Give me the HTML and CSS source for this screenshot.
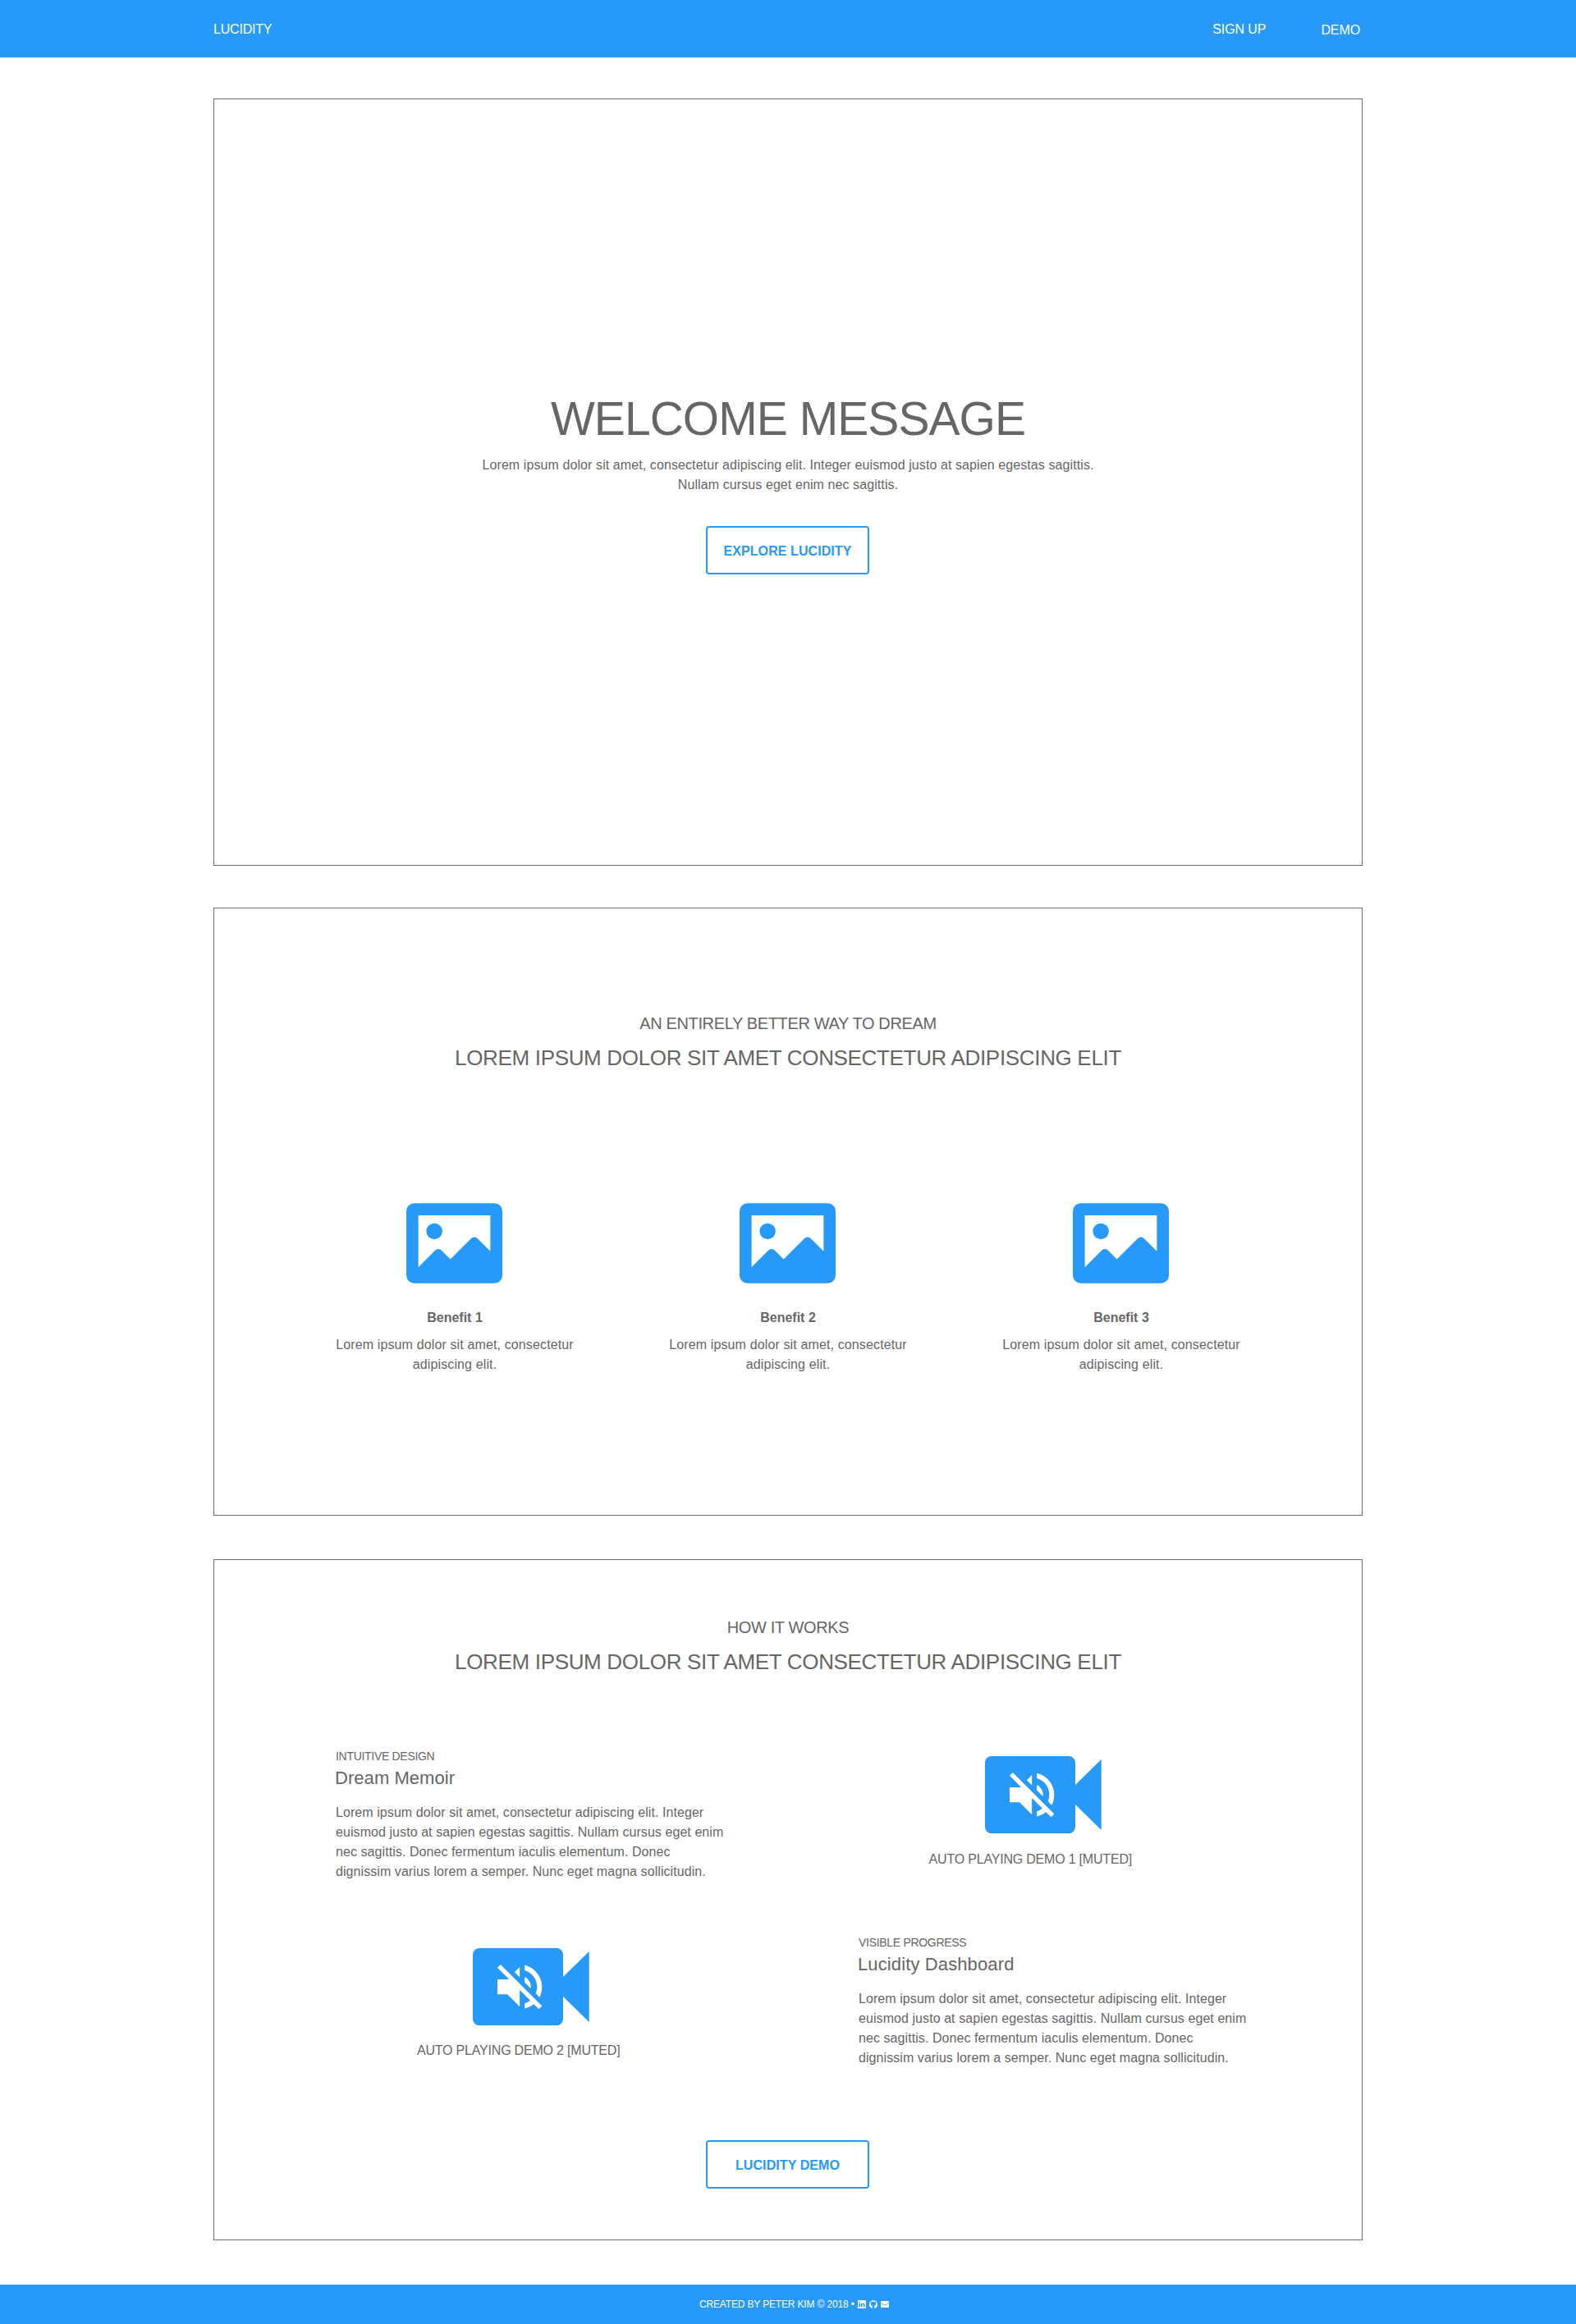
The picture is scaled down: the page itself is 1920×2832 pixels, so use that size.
FILE: index.html
```html
<!DOCTYPE html>
<html lang="en">
<head>
<meta charset="utf-8">
<title>Lucidity</title>
<link rel="stylesheet" href="styles.css">
</head>
<body>
<svg class="sprite" aria-hidden="true">
  <symbol id="picture" viewBox="0 0 24 20">
    <path fill-rule="evenodd" d="M2 0H22A2 2 0 0 1 24 2V18A2 2 0 0 1 22 20H2A2 2 0 0 1 0 18V2A2 2 0 0 1 2 0ZM3 3V16L7.1 11.9Q8 11 8.900 11.900L11 14L16.100 8.900Q17 8 17.900 8.900L21 12V3Z"/>
    <circle cx="7" cy="7" r="2"/>
  </symbol>
  <symbol id="camera" viewBox="0 0 142 94.5">
    <path d="M8 0H102A8 8 0 0 1 110 8V35L141.700 4V90L110 59V86.300A8 8 0 0 1 102 94.300H8A8 8 0 0 1 0 86.300V8A8 8 0 0 1 8 0Z"/>
    <path fill="#fff" transform="translate(20.9 10.9) scale(3.02)" d="M16.500 12c0-1.770-1.020-3.290-2.500-4.030v2.210l2.450 2.450c.03-.2.05-.41.05-.63zm2.500 0c0 .94-.2 1.820-.54 2.640l1.510 1.510C20.630 14.910 21 13.500 21 12c0-4.280-2.990-7.860-7-8.770v2.060c2.890.86 5 3.540 5 6.710zM4.270 3L3 4.270 7.730 9H3v6h4l5 5v-6.730l4.250 4.250c-.67.52-1.420.93-2.250 1.180v2.060c1.380-.31 2.630-.95 3.690-1.810L19.730 21 21 19.730l-9-9L4.270 3zM12 4L9.910 6.090 12 8.180V4z"/>
  </symbol>
</svg>

<header class="topbar">
  <div class="topbar-inner">
    <a class="brand">LUCIDITY</a>
    <nav class="nav"><a class="signup">SIGN UP</a><a class="demo-link">DEMO</a></nav>
  </div>
</header>

<main class="page">
  <section class="panel hero">
    <h1>WELCOME MESSAGE</h1>
    <p class="copy">Lorem ipsum dolor sit amet, consectetur adipiscing elit. Integer euismod justo at sapien egestas sagittis.<br>Nullam cursus eget enim nec sagittis.</p>
    <a class="button">EXPLORE LUCIDITY</a>
  </section>

  <section class="panel benefits">
    <p class="eyebrow">AN ENTIRELY BETTER WAY TO DREAM</p>
    <h2>LOREM IPSUM DOLOR SIT AMET CONSECTETUR ADIPISCING ELIT</h2>
    <div class="benefit-grid">
      <article class="benefit"><svg class="picture"><use href="#picture"/></svg><h3>Benefit 1</h3><p class="copy">Lorem ipsum dolor sit amet, consectetur<br>adipiscing elit.</p></article>
      <article class="benefit"><svg class="picture"><use href="#picture"/></svg><h3>Benefit 2</h3><p class="copy">Lorem ipsum dolor sit amet, consectetur<br>adipiscing elit.</p></article>
      <article class="benefit"><svg class="picture"><use href="#picture"/></svg><h3>Benefit 3</h3><p class="copy">Lorem ipsum dolor sit amet, consectetur<br>adipiscing elit.</p></article>
    </div>
  </section>

  <section class="panel works">
    <p class="eyebrow">HOW IT WORKS</p>
    <h2>LOREM IPSUM DOLOR SIT AMET CONSECTETUR ADIPISCING ELIT</h2>
    <div class="row first">
      <article class="feature">
        <p class="kicker">INTUITIVE DESIGN</p>
        <h3>Dream Memoir</h3>
        <p class="copy">Lorem ipsum dolor sit amet, consectetur adipiscing elit. Integer<br>euismod justo at sapien egestas sagittis. Nullam cursus eget enim<br>nec sagittis. Donec fermentum iaculis elementum. Donec<br>dignissim varius lorem a semper. Nunc eget magna sollicitudin.</p>
      </article>
      <figure class="video"><svg class="camera"><use href="#camera"/></svg><figcaption>AUTO PLAYING DEMO 1 [MUTED]</figcaption></figure>
    </div>
    <div class="row second">
      <figure class="video"><svg class="camera"><use href="#camera"/></svg><figcaption>AUTO PLAYING DEMO 2 [MUTED]</figcaption></figure>
      <article class="feature">
        <p class="kicker">VISIBLE PROGRESS</p>
        <h3>Lucidity Dashboard</h3>
        <p class="copy">Lorem ipsum dolor sit amet, consectetur adipiscing elit. Integer<br>euismod justo at sapien egestas sagittis. Nullam cursus eget enim<br>nec sagittis. Donec fermentum iaculis elementum. Donec<br>dignissim varius lorem a semper. Nunc eget magna sollicitudin.</p>
      </article>
    </div>
    <a class="button">LUCIDITY DEMO</a>
  </section>
</main>

<footer class="footer">
  <span class="credit">CREATED BY PETER KIM © 2018 •</span>
  <span class="social">
    <svg viewBox="0 0 448 448"><path d="M416 0H31.900C14.300 0 0 14.500 0 32.300v383.400C0 433.500 14.300 448 31.900 448H416c17.600 0 32-14.500 32-32.300V32.300C448 14.500 433.600 0 416 0zM135.400 384H69V170.200h66.500V384zM102.200 141c-21.300 0-38.500-17.300-38.500-38.500S80.900 64 102.200 64c21.200 0 38.500 17.300 38.500 38.500 0 21.300-17.200 38.500-38.500 38.500zm282.100 243h-66.400V280c0-24.800-.5-56.700-34.500-56.700-34.600 0-39.900 27-39.900 54.900V384h-66.400V170.200h63.700v29.200h.9c8.900-16.800 30.600-34.500 62.900-34.500 67.200 0 79.700 44.300 79.700 101.900V384z"/></svg>
    <svg viewBox="0 0 24 24"><path d="M12 .5a12 12 0 0 0-4.200 23.200c.6.100.9-.3.900-.6v-5.200c0-1.300.3-2.100.9-2.600-3-.3-5.500-1.500-5.500-5.300 0-1.400.5-2.500 1.300-3.300-.2-.8-.3-2 .2-3.200 1.200-.1 2.500.6 3.500 1.300a11 11 0 0 1 5.800 0c1-.7 2.300-1.400 3.500-1.300.5 1.200.4 2.400.2 3.200.8.800 1.300 1.900 1.300 3.300 0 3.800-2.500 5-5.500 5.300.6.500.9 1.300.9 2.600v5.200c0 .3.300.7.900.6A12 12 0 0 0 12 .5z"/></svg>
    <svg class="mail" viewBox="0 0 10 8"><rect width="10" height="8" rx="1"/><path d="M0 2L4 4.900Q5 5.500 6 4.900L10 2" fill="none" stroke="#2699fb" stroke-width=".8"/></svg>
  </span>
</footer>
</body>
</html>
```
FILE: styles.css
```css
* { box-sizing: border-box; margin: 0; padding: 0; }

body {
  font: 16px/24px "Liberation Sans", Helvetica, Arial, sans-serif;
  color: #666;
  background: #fff;
  white-space: nowrap;
}

svg { display: block; fill: #2699fb; }
.sprite { width: 0; height: 0; position: absolute; }

.topbar { height: 70px; background: #2699fb; color: #fff; }
.topbar-inner {
  width: 1400px;
  margin: 0 auto;
  padding: 24px 3px 0 0;
  display: flex;
  justify-content: space-between;
}
.brand { letter-spacing: -0.2px; }
.nav { display: flex; gap: 67px; letter-spacing: -0.1px; }
.demo-link { padding-top: 1px; }

.page {
  width: 1400px;
  margin: 50px auto 54px;
  display: flex;
  flex-direction: column;
}
.panel {
  border: 1px solid #707070;
  display: flex;
  flex-direction: column;
  align-items: center;
  text-align: center;
}
.hero { height: 935px; padding-top: 357px; }
.benefits { height: 741px; margin-top: 51px; padding-top: 125px; }
.works { height: 830px; margin-top: 53px; padding-top: 67px; }

h1 {
  font-size: 57px;
  line-height: 64px;
  font-weight: 400;
  letter-spacing: -0.95px;
  margin-bottom: 13px;
}
h2 {
  font-size: 26px;
  line-height: 40px;
  font-weight: 400;
  letter-spacing: -0.33px;
  margin-top: 7px;
}
h3 { font-size: 16px; }
.eyebrow { font-size: 20px; line-height: 30px; letter-spacing: -0.36px; }
.copy { letter-spacing: 0.09px; }
.benefit .copy { letter-spacing: 0.13px; }
.feature .copy { letter-spacing: 0.07px; }

.button {
  width: 199px;
  height: 59px;
  margin-right: 1px;
  border: 2px solid #2699fb;
  border-radius: 4px;
  color: #2699fb;
  font-weight: 700;
  line-height: 57px;
  letter-spacing: 0.08px;
}
.hero .button { margin-top: 38px; }

.benefit-grid {
  display: grid;
  grid-template-columns: repeat(3, 406px);
  margin-top: 157px;
}
.benefit { display: flex; flex-direction: column; align-items: center; }
.picture { width: 117px; height: 98px; margin-right: 1px; }
.benefit h3 { margin: 30px 0 9px; }

.row { width: 100%; display: flex; justify-content: space-between; }
.first { padding: 0 280px 0 148px; margin-top: 85px; height: 217px; }
.second { padding: 0 140px 0 247px; margin-top: 10px; }
.feature { width: 473px; text-align: left; }
.kicker {
  font-size: 14px;
  line-height: 20px;
  letter-spacing: -0.3px;
  margin-bottom: 1px;
}
.feature h3 {
  font-size: 22px;
  font-weight: 400;
  line-height: 32px;
  letter-spacing: 0.05px;
  margin: 0 0 14px -1px;
}
.second h3 { letter-spacing: 0.12px; }
.video { display: flex; flex-direction: column; align-items: center; }
.camera { width: 142px; height: 94.5px; margin-left: 31px; }
.first .camera { margin-top: 10px; }
.second .camera { margin-top: 17px; }
.video figcaption { margin-top: 19px; letter-spacing: -0.2px; }
.second figcaption { margin-top: 18px; }
.works .button { margin-top: 88px; }

.footer {
  height: 48px;
  background: #2699fb;
  color: #fff;
  font-size: 12px;
  display: flex;
  align-items: center;
  padding-left: 852px;
}
.credit { width: 193px; letter-spacing: -0.16px; }
.social { display: flex; align-items: center; gap: 4px; }
.social svg { width: 10px; height: 10px; fill: #fff; }
.social .mail { height: 8px; }
```
